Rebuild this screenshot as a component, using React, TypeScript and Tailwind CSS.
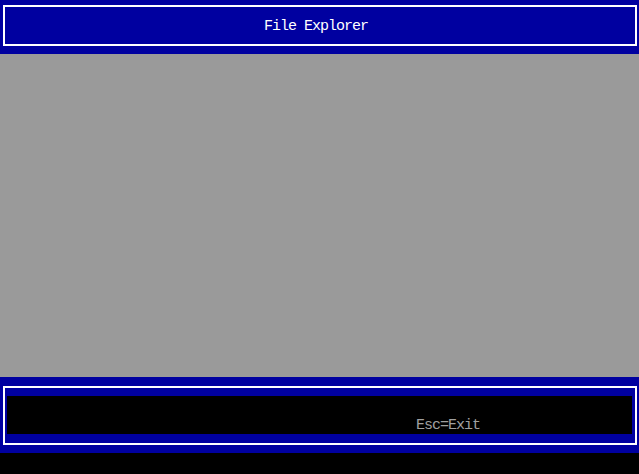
import React from 'react';

const mono = { fontFamily: '"Liberation Mono", "DejaVu Sans Mono", monospace' };

const App: React.FC = () => {
  return (
    <div className="flex h-[474px] w-full flex-col bg-black" style={mono}>
      {/* Title bar */}
      <header className="flex h-[54px] shrink-0 flex-col bg-[#0000a0] pt-[5px] pl-[3px] pr-[2px]">
        <div className="flex h-[41px] items-center border-2 border-white pl-[259px]">
          <span className="mt-[2px] text-[15px] leading-none tracking-[-1px] text-white">File Explorer</span>
        </div>
      </header>

      {/* Content area */}
      <main className="flex-1 bg-[#9a9a9a]" />

      {/* Status bar */}
      <footer className="h-[76px] shrink-0 bg-[#0000a0] pt-[9px] pb-[8px] pl-[3px] pr-[2px]">
        <div className="h-[59px] border-2 border-white pt-[8px] pb-[9px] pl-[2px] pr-[3px]">
          <div className="grid h-[38px] grid-rows-2 bg-black">
            <div />
            <div className="flex items-center pl-[409px]">
              <span className="mt-[2px] text-[15px] leading-none tracking-[-1px] text-[#a0a0a0]">Esc=Exit</span>
            </div>
          </div>
        </div>
      </footer>

      <div className="h-[21px] shrink-0 bg-black" />
    </div>
  );
};

export default App;
